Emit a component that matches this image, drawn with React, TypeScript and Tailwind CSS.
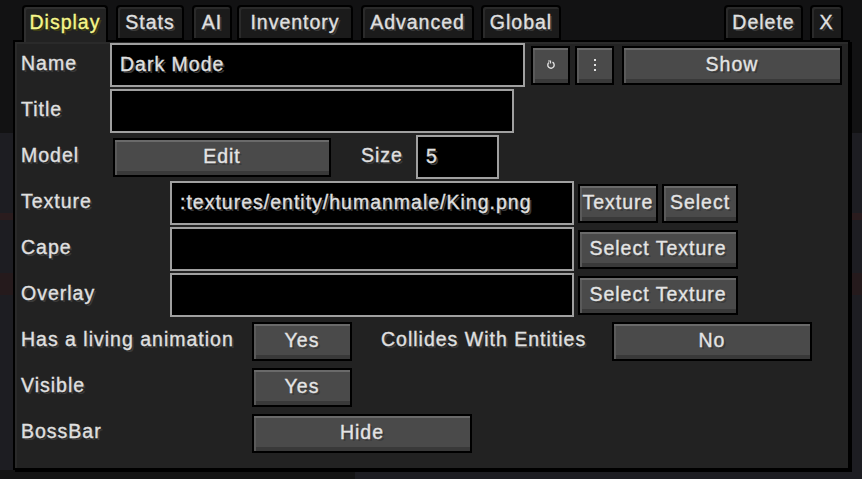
import React from "react";

const shadow = "[text-shadow:2px_2px_0_#3a3a3a]";

function Tab({ label, w, active = false, ml = "" }: { label: string; w: string; active?: boolean; ml?: string }) {
  return (
    <div
      className={`${w} ${ml} flex shrink-0 items-start justify-center whitespace-nowrap rounded-t-[4px] border-2 border-black pt-[6px] ${
        active
          ? "relative z-10 h-[37px] border-b-0 bg-[#222222] text-[#f6f68a] shadow-[inset_2px_2px_0_#2f2f2f] [text-shadow:2px_2px_0_#3d3d15]"
          : "h-[35px] bg-[#1b1b1b] text-[#e0e0e0] shadow-[inset_2px_2px_0_#2a2a2a] " + shadow
      }`}
    >
      {label}
    </div>
  );
}

function Btn({ w, children }: { w: string; children: React.ReactNode }) {
  return (
    <div
      className={`${w} flex h-[39px] shrink-0 items-center justify-center whitespace-nowrap border-2 border-black bg-[#4a4a4a] text-[#e4e4e4] shadow-[inset_0_2px_0_#6a6a6a,inset_2px_0_0_#5a5a5a,inset_0_-4px_0_#393939] ${shadow}`}
    >
      {children}
    </div>
  );
}

function Field({ w, value = "" }: { w: string; value?: string }) {
  return (
    <div
      className={`${w} flex h-[44px] shrink-0 items-center overflow-hidden whitespace-nowrap border-2 border-[#a0a0a0] bg-black pl-[8px] text-[#e0e0e0] ${shadow}`}
    >
      {value}
    </div>
  );
}

function Label({ w, children, ml = "" }: { w: string; children: React.ReactNode; ml?: string }) {
  return (
    <div className={`${w} ${ml} shrink-0 whitespace-nowrap pb-[3px] text-[#e0e0e0] ${shadow}`}>{children}</div>
  );
}

function Row({ children }: { children: React.ReactNode }) {
  return <div className="flex h-[46px] items-center">{children}</div>;
}

export default function App() {
  return (
    <div className="relative h-[479px] w-[862px] overflow-hidden bg-[linear-gradient(to_bottom,#121213_0,#121213_133px,#1d1d22_133px,#1d1d22_213px,#2a1c1e_213px,#2a1c1e_220px,#1d1d22_220px,#1d1d22_273px,#251a1c_273px,#251a1c_295px,#1d1d22_295px)] font-['Liberation_Sans',Arial,sans-serif] text-[19.5px] leading-none tracking-[1px] [-webkit-text-stroke:0.35px_currentColor]">
      <div className="absolute bottom-0 left-0 h-[9px] w-[355px] bg-[#141414]" />
      <div className="relative">
        {/* tabs */}
        <div className="flex items-start pl-[22px] pr-[19px] pt-[5px]">
          <Tab label="Display" w="w-[86px]" active />
          <Tab label="Stats" w="w-[68px]" ml="ml-[8px]" />
          <Tab label="AI" w="w-[40px]" ml="ml-[8px]" />
          <Tab label="Inventory" w="w-[116px]" ml="ml-[5px]" />
          <Tab label="Advanced" w="w-[113px]" ml="ml-[8px]" />
          <Tab label="Global" w="w-[80px]" ml="ml-[7px]" />
          <Tab label="Delete" w="w-[79px]" ml="ml-auto" />
          <Tab label="X" w="w-[33px]" ml="ml-[7px]" />
        </div>

        {/* panel */}
        <div className="-mt-[2px] ml-[13px] h-[430px] w-[837px] border-2 border-black bg-[#222222] pl-[6px] shadow-[inset_2px_2px_0_#2a2a2a,2px_2px_0_#000]">
          <Row>
            <Label w="w-[89px]">Name</Label>
            <Field w="w-[415px]" value="Dark Mode" />
            <div className="ml-[6px]">
              <Btn w="w-[39px]">
                <svg width="10" height="10" viewBox="0 0 10 10" className="text-[#e0e0e0]">
                  <path d="M3 2.5 A3.2 3.2 0 1 0 6.5 2.2" fill="none" stroke="currentColor" strokeWidth="1.4" />
                  <path d="M2 1 L4.5 1 L4.5 3.5" fill="none" stroke="currentColor" strokeWidth="1.2" />
                </svg>
              </Btn>
            </div>
            <div className="ml-[5px]">
              <Btn w="w-[39px]">
                <svg width="4" height="12" viewBox="0 0 4 12" className="text-[#e0e0e0]">
                  <rect x="1" y="0" width="2" height="2" fill="currentColor" />
                  <rect x="1" y="5" width="2" height="2" fill="currentColor" />
                  <rect x="1" y="10" width="2" height="2" fill="currentColor" />
                </svg>
              </Btn>
            </div>
            <div className="ml-[8px]">
              <Btn w="w-[220px]">Show</Btn>
            </div>
          </Row>
          <Row>
            <Label w="w-[89px]">Title</Label>
            <Field w="w-[404px]" />
          </Row>
          <Row>
            <Label w="w-[92px]">Model</Label>
            <Btn w="w-[218px]">Edit</Btn>
            <Label w="w-[55px]" ml="ml-[30px]">
              Size
            </Label>
            <Field w="w-[83px]" value="5" />
          </Row>
          <Row>
            <Label w="w-[149px]">Texture</Label>
            <Field w="w-[404px]" value=":textures/entity/humanmale/King.png" />
            <div className="ml-[4px]">
              <Btn w="w-[80px]">Texture</Btn>
            </div>
            <div className="ml-[4px]">
              <Btn w="w-[76px]">Select</Btn>
            </div>
          </Row>
          <Row>
            <Label w="w-[149px]">Cape</Label>
            <Field w="w-[404px]" />
            <div className="ml-[4px]">
              <Btn w="w-[160px]">Select Texture</Btn>
            </div>
          </Row>
          <Row>
            <Label w="w-[149px]">Overlay</Label>
            <Field w="w-[404px]" />
            <div className="ml-[4px]">
              <Btn w="w-[160px]">Select Texture</Btn>
            </div>
          </Row>
          <Row>
            <Label w="w-[231px]">Has a living animation</Label>
            <Btn w="w-[100px]">Yes</Btn>
            <Label w="w-[231px]" ml="ml-[29px]">
              Collides With Entities
            </Label>
            <Btn w="w-[200px]">No</Btn>
          </Row>
          <Row>
            <Label w="w-[231px]">Visible</Label>
            <Btn w="w-[100px]">Yes</Btn>
          </Row>
          <Row>
            <Label w="w-[231px]">BossBar</Label>
            <Btn w="w-[220px]">Hide</Btn>
          </Row>
        </div>
      </div>
    </div>
  );
}
